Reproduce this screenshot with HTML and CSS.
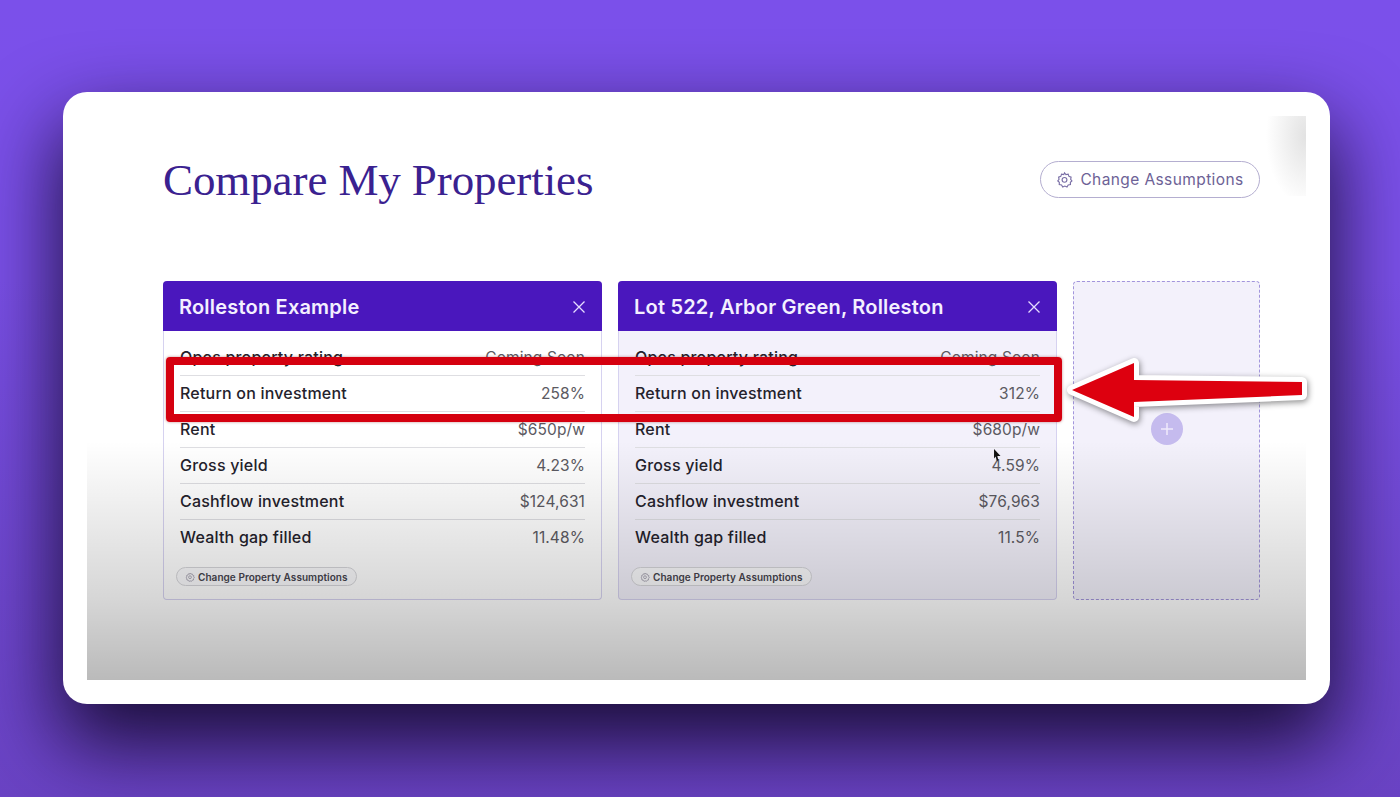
FILE: index.html
```html
<!DOCTYPE html>
<html lang="en">
<head>
  <meta charset="UTF-8" />
  <title>Compare My Properties</title>
  <link rel="stylesheet" href="styles.css">
</head>
<body>

<div class="window">
  <div class="screen">

    <div class="top-bar">
      <h1 class="title">Compare My Properties</h1>
      <button class="assume-btn">
        <svg class="gear" viewBox="0 0 24 24"><path d="M12 2.5l2 2.6 3.2-.6 1 3.1 3.1 1-.6 3.2 1.8 2.2-2.2 2 .1 3.2-3.2.5-1.7 2.8-3-1.2-3 1.2-1.7-2.8-3.2-.5.1-3.2-2.2-2 1.8-2.2-.6-3.2 3.1-1 1-3.1 3.2.6z"/><circle cx="12" cy="12.5" r="3.4"/></svg>
        Change Assumptions
      </button>
    </div>

    <div class="columns">
      <div class="card">
        <div class="card-head">
          <span>Rolleston Example</span>
          <svg class="close" viewBox="0 0 14 14"><path d="M1.5 1.5l11 11M12.5 1.5l-11 11"/></svg>
        </div>
        <div class="card-body">
          <div class="row"><span class="label">Opes property rating</span><span class="value">Coming Soon</span></div>
          <div class="row"><span class="label">Return on investment</span><span class="value">258%</span></div>
          <div class="row"><span class="label">Rent</span><span class="value">$650p/w</span></div>
          <div class="row"><span class="label">Gross yield</span><span class="value">4.23%</span></div>
          <div class="row"><span class="label">Cashflow investment</span><span class="value">$124,631</span></div>
          <div class="row"><span class="label">Wealth gap filled</span><span class="value">11.48%</span></div>
        </div>
        <button class="chip">
          <svg class="chip-gear" viewBox="0 0 24 24"><path d="M12 2.5l2 2.6 3.2-.6 1 3.1 3.1 1-.6 3.2 1.8 2.2-2.2 2 .1 3.2-3.2.5-1.7 2.8-3-1.2-3 1.2-1.7-2.8-3.2-.5.1-3.2-2.2-2 1.8-2.2-.6-3.2 3.1-1 1-3.1 3.2.6z"/><circle cx="12" cy="12.5" r="3.4"/></svg>
          Change Property Assumptions
        </button>
      </div>

      <div class="card card-tint">
        <div class="card-head">
          <span>Lot 522, Arbor Green, Rolleston</span>
          <svg class="close" viewBox="0 0 14 14"><path d="M1.5 1.5l11 11M12.5 1.5l-11 11"/></svg>
        </div>
        <div class="card-body">
          <div class="row"><span class="label">Opes property rating</span><span class="value">Coming Soon</span></div>
          <div class="row"><span class="label">Return on investment</span><span class="value">312%</span></div>
          <div class="row"><span class="label">Rent</span><span class="value">$680p/w</span></div>
          <div class="row"><span class="label">Gross yield</span><span class="value">4.59%</span></div>
          <div class="row"><span class="label">Cashflow investment</span><span class="value">$76,963</span></div>
          <div class="row"><span class="label">Wealth gap filled</span><span class="value">11.5%</span></div>
        </div>
        <button class="chip">
          <svg class="chip-gear" viewBox="0 0 24 24"><path d="M12 2.5l2 2.6 3.2-.6 1 3.1 3.1 1-.6 3.2 1.8 2.2-2.2 2 .1 3.2-3.2.5-1.7 2.8-3-1.2-3 1.2-1.7-2.8-3.2-.5.1-3.2-2.2-2 1.8-2.2-.6-3.2 3.1-1 1-3.1 3.2.6z"/><circle cx="12" cy="12.5" r="3.4"/></svg>
          Change Property Assumptions
        </button>
      </div>

      <div class="add-card">
        <div class="add-btn">
          <svg viewBox="0 0 14 14"><path d="M7 1v12M1 7h12"/></svg>
        </div>
      </div>
    </div>

    <!-- things sitting on top of the screen recording -->
    <div class="corner-glow"></div>
    <div class="fade"></div>
    <svg class="cursor" viewBox="0 0 10 15"><path d="M1 0l7.500 8H4.800L6 13l-1.800.6L2.800 8.600 1 11z"/></svg>
    <div class="red-box"></div>
    <svg class="arrow" viewBox="0 0 250 70">
      <path d="M8 31L70 4 70 21 238 23 238 36 70 43 70 58z"/>
    </svg>
  </div>
</div>

</body>
</html>
```

FILE: styles.css
```css
body, html {
  margin: 0;
  padding: 0;
  height: 100%;
  overflow: hidden;
}

body {
  background: linear-gradient(180deg, #7b50ea 0%, #7b50e8 35%, #6f47cf 75%, #6a43c4 100%);
  font-family: Inter, 'Noto Sans', sans-serif;
  padding: 92px 0 0 63px;
  box-sizing: border-box;
}

.window {
  width: 1267px;
  height: 612px;
  box-sizing: border-box;
  padding: 24px;
  background: #fff;
  border-radius: 24px;
  box-shadow: 0 36px 80px 4px rgba(12, 4, 30, 0.85);
}

.screen {
  position: relative;
  height: 564px;
  box-sizing: border-box;
  padding: 45px 46px 0 76px;
  background: #fff;
}

.top-bar {
  display: flex;
  justify-content: space-between;
  align-items: flex-start;
  height: 37px;
}

.title {
  margin: 0;
  font-family: 'Liberation Serif', serif;
  font-weight: 400;
  font-size: 45px;
  line-height: 39px;
  letter-spacing: -0.1px;
  color: #3a2190;
}

.assume-btn {
  display: flex;
  align-items: center;
  justify-content: center;
  gap: 7px;
  width: 220px;
  height: 37px;
  padding: 0;
  background: #fff;
  border: 1px solid #b4aed0;
  border-radius: 19px;
  font-family: inherit;
  font-size: 15.500px;
  letter-spacing: 0.4px;
  color: #6d6296;
}

.gear {
  width: 17px;
  height: 17px;
  fill: none;
  stroke: #7a6fa6;
  stroke-width: 1.6;
}

.columns {
  display: flex;
  gap: 16px;
  margin-top: 83px;
}

.card {
  width: 439px;
  height: 319px;
  box-sizing: border-box;
  background: #fff;
  border: 1px solid #d6d2f0;
  border-top: none;
  border-radius: 4px;
}

.card-tint {
  background: #f3f1fb;
}

.card-head {
  display: flex;
  justify-content: space-between;
  align-items: center;
  height: 50px;
  box-sizing: border-box;
  margin: 0 -1px;
  padding: 1px 16px 0 16px;
  background: #4a17bd;
  border-radius: 4px 4px 0 0;
  color: #f4f0ff;
  font-size: 20px;
  font-weight: 600;
  letter-spacing: 0.2px;
}

.close {
  width: 14px;
  height: 14px;
  fill: none;
  stroke: #e6dcff;
  stroke-width: 1.300;
}

.card-body {
  padding: 9px 16px 0;
}

.row {
  display: flex;
  justify-content: space-between;
  align-items: center;
  height: 36px;
  box-sizing: border-box;
  border-bottom: 1px solid #dedee2;
  font-size: 16px;
  letter-spacing: 0.2px;
}

.row:last-child {
  border-bottom-color: transparent;
}

.label {
  margin-bottom: 2px;
  font-weight: 500;
  color: #24222c;
}

.value {
  font-size: 15.500px;
  letter-spacing: 0.1px;
  color: #5c5a62;
}

.chip {
  display: flex;
  align-items: center;
  gap: 3px;
  width: 181px;
  height: 19px;
  margin: 11px 0 0 12px;
  padding: 0 0 0 8px;
  background: #fafafc;
  border: 1px solid #d6d6da;
  border-radius: 10px;
  font-family: inherit;
  font-size: 10px;
  font-weight: 600;
  letter-spacing: 0.05px;
  color: #46444e;
  white-space: nowrap;
}

.chip-gear {
  width: 10px;
  height: 10px;
  fill: none;
  stroke: #a3a0ae;
  stroke-width: 2;
}

.add-card {
  flex: 1;
  height: 319px;
  box-sizing: border-box;
  display: flex;
  justify-content: center;
  padding-top: 131px;
  background: #f3f1fb;
  border: 1px dashed #a295dc;
  border-radius: 4px;
}

.add-btn {
  display: flex;
  align-items: center;
  justify-content: center;
  width: 32px;
  height: 32px;
  background: #c5bbee;
  border-radius: 50%;
}

.add-btn svg {
  width: 14px;
  height: 14px;
  fill: none;
  stroke: #efeafc;
  stroke-width: 1.500;
}

.corner-glow {
  position: absolute;
  top: 0;
  right: 0;
  width: 40px;
  height: 80px;
  background: radial-gradient(ellipse 40px 70px at 100% 25%, #e2e2e2, rgba(255, 255, 255, 0));
}

.fade {
  position: absolute;
  left: 0;
  right: 0;
  top: 325px;
  bottom: 0;
  background: linear-gradient(180deg, rgba(0, 0, 0, 0), rgba(0, 0, 0, 0.16) 66%, rgba(0, 0, 0, 0.27));
  pointer-events: none;
}

.cursor {
  position: absolute;
  left: 906px;
  top: 333px;
  width: 9px;
  height: 13px;
  fill: #111;
}

.red-box {
  position: absolute;
  left: 79px;
  top: 241px;
  width: 896px;
  height: 65px;
  box-sizing: border-box;
  border: 8.500px solid #d5000f;
  border-radius: 4px;
  box-shadow: 0 0 3px rgba(120, 0, 0, 0.45);
}

.arrow {
  position: absolute;
  left: 977px;
  top: 243px;
  width: 250px;
  height: 70px;
  overflow: visible;
  fill: #dd000f;
  stroke: #fff;
  stroke-width: 10px;
  stroke-linejoin: round;
  paint-order: stroke;
  filter: drop-shadow(1px 2px 3px rgba(0, 0, 0, 0.45));
}
```
